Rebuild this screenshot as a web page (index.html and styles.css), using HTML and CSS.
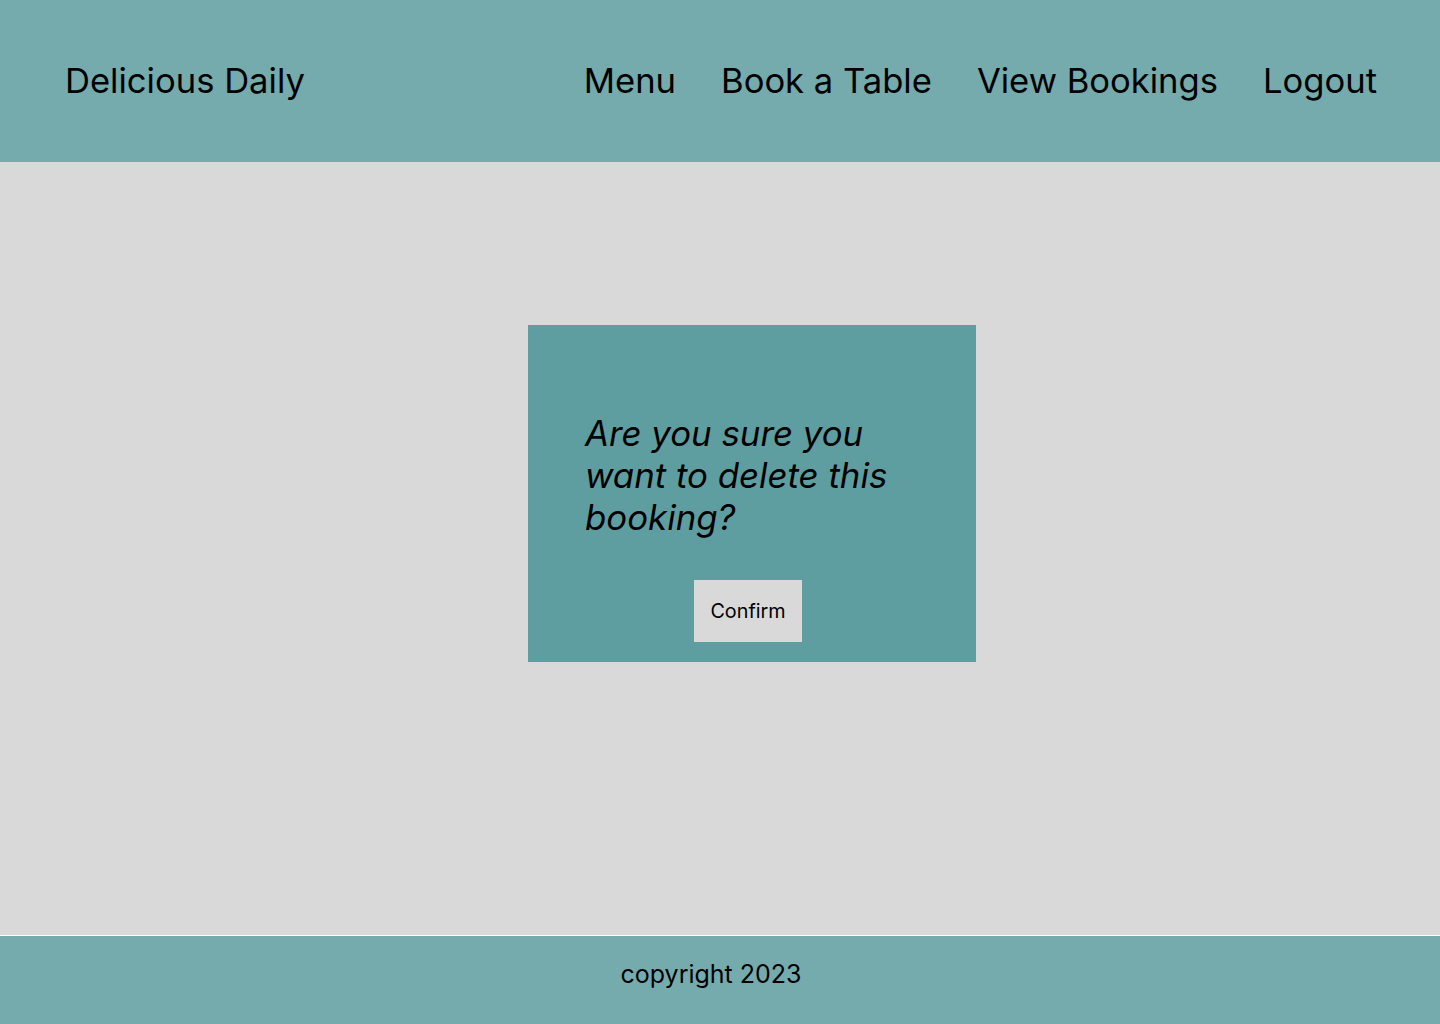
FILE: index.html
```html
<!DOCTYPE html>
<html lang="en">
<head>
<meta charset="utf-8">
<title>Delicious Daily</title>
<link rel="stylesheet" href="styles.css">
</head>
<body>
<header class="site-header">
  <div class="brand">Delicious Daily</div>
  <nav class="nav">
    <a href="#">Menu</a>
    <a href="#">Book a Table</a>
    <a href="#">View Bookings</a>
    <a href="#">Logout</a>
  </nav>
</header>
<main class="main">
  <section class="dialog">
    <p class="dialog-text">Are you sure you want to delete this booking?</p>
    <div class="dialog-actions">
      <button class="confirm">Confirm</button>
    </div>
  </section>
</main>
<footer class="site-footer">copyright 2023</footer>
</body>
</html>
```
FILE: styles.css
```css
* { box-sizing: border-box; }
html, body { margin: 0; padding: 0; }
body {
  font-family: Inter, "Noto Sans", sans-serif;
  color: #000;
  background: #d9d9d9;
  height: 1024px;
  display: flex;
  flex-direction: column;
}
.site-header {
  height: 162px;
  background: #75abad;
  display: flex;
  align-items: center;
  justify-content: space-between;
  padding: 0 63px 2px 65px;
}
.brand { font-size: 34.6px; }
.nav { display: flex; gap: 45px; }
.nav a { color: #000; text-decoration: none; font-size: 34.6px; }
.main {
  flex: 1;
  display: flex;
  justify-content: center;
  align-items: flex-start;
  padding-top: 163px;
  padding-left: 64px;
}
.dialog {
  width: 448px;
  height: 337px;
  background: #5f9ea0;
  padding: 87px 40px 20px 57px;
  display: flex;
  flex-direction: column;
}
.dialog-text {
  margin: 0;
  font-style: italic;
  font-size: 34.8px;
  line-height: 42px;
}
.dialog-actions {
  margin-top: auto;
  display: flex;
  justify-content: center;
  padding-right: 25px;
}
.confirm {
  width: 108px;
  height: 62px;
  background: #d9d9d9;
  border: none;
  font-family: Inter, "Noto Sans", sans-serif;
  font-size: 19.8px;
  color: #000;
  padding: 0;
}
.site-footer {
  height: 89px;
  background: #75abad;
  border-top: 1px solid #ffffff;
  display: flex;
  align-items: center;
  justify-content: center;
  padding: 0 18px 12px 0;
  font-size: 25px;
}
```
